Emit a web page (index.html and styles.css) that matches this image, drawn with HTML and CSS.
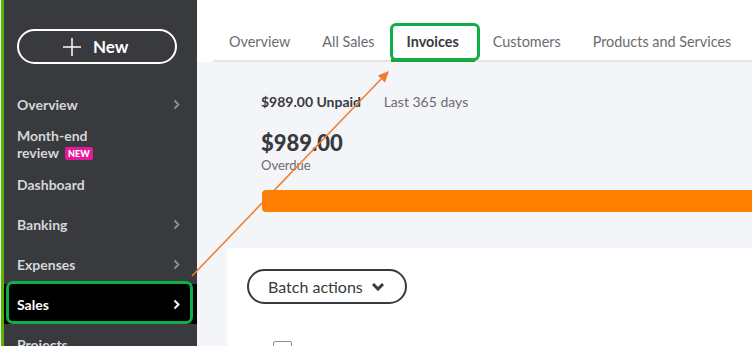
FILE: index.html
```html
<!DOCTYPE html>
<html lang="en">
<head>
<meta charset="UTF-8" />
<meta name="viewport" content="width=device-width, initial-scale=1.0" />
<title>Sales - Invoices</title>
<link rel="stylesheet" href="styles.css">
</head>
<body>
<div class="app">

<!-- left navigation -->
<aside class="sidebar">
    <button class="new-button">
        <svg class="plus" width="18" height="18" viewBox="0 0 18 18">
            <path d="M9 0V18M0 9H18" stroke="#fff" stroke-width="1.5" fill="none" />
        </svg>
        <span>New</span>
    </button>
    <nav class="nav">
        <a class="nav-item">Overview <svg class="chev" width="7" height="11" viewBox="0 0 7 11"><polyline points="1.5,1.5 5.5,5.5 1.5,9.5" /></svg></a>
        <a class="nav-item two-line"><span>Month-end<br>review <span class="badge">NEW</span></span></a>
        <a class="nav-item">Dashboard</a>
        <a class="nav-item">Banking <svg class="chev" width="7" height="11" viewBox="0 0 7 11"><polyline points="1.5,1.5 5.5,5.5 1.5,9.5" /></svg></a>
        <a class="nav-item">Expenses <svg class="chev" width="7" height="11" viewBox="0 0 7 11"><polyline points="1.5,1.5 5.5,5.5 1.5,9.5" /></svg></a>
        <a class="nav-item active">Sales <svg class="chev" width="7" height="11" viewBox="0 0 7 11"><polyline points="1.5,1.5 5.5,5.5 1.5,9.5" /></svg></a>
        <a class="nav-item">Projects</a>
    </nav>
</aside>

<!-- main area -->
<main class="main">
    <div class="tabbar">
        <div class="tabs">
            <a class="tab">Overview</a>
            <a class="tab">All Sales</a>
            <a class="tab active">Invoices</a>
            <a class="tab">Customers</a>
            <a class="tab">Products and Services</a>
        </div>
    </div>

    <section class="summary">
        <div class="summary-head">
            <span class="unpaid">$989.00 Unpaid</span>
            <span class="period">Last 365 days</span>
        </div>
        <div class="amount">$989.00</div>
        <div class="amount-label">Overdue</div>
        <div class="overdue-bar"></div>
    </section>

    <section class="card">
        <button class="batch-button">
            Batch actions
            <svg width="14" height="9" viewBox="0 0 14 9"><polyline points="2,2 7,7 12,2" /></svg>
        </button>
        <div class="table-head">
            <span class="checkbox"></span>
        </div>
    </section>
</main>

<!-- annotation arrow -->
<svg class="arrow" width="752" height="346" viewBox="0 0 752 346">
    <line x1="192" y1="276" x2="384" y2="76" stroke="#ee7d2f" stroke-width="1.5" />
    <polygon points="389,71 385,82.4 377.8,75.4" fill="#ee7d2f" />
</svg>

</div>
</body>
</html>
```

FILE: styles.css
```css
* {
    box-sizing: border-box;
}
body {
    margin: 0;
    font-family: Lato, 'Open Sans', Arial, sans-serif;
    background-color: #ffffff;
    overflow: hidden;
}
.app {
    position: relative;
    display: flex;
    width: 752px;
    height: 346px;
    overflow: hidden;
}

/* sidebar */
.sidebar {
    flex: 0 0 196px;
    margin-left: 1px;
    background-color: #393a3d;
    border-left: 3px solid #53b700;
    padding-top: 29px;
}
.new-button {
    display: flex;
    align-items: center;
    width: 160px;
    height: 35px;
    margin-left: 13px;
    padding: 0 0 0 44px;
    background: transparent;
    border: 2px solid #ffffff;
    border-radius: 18px;
    color: #ffffff;
    font-family: inherit;
    font-size: 17px;
    font-weight: 700;
}
.new-button .plus {
    margin-right: 12px;
}
.nav {
    margin-top: 20px;
}
.nav-item {
    position: relative;
    display: flex;
    align-items: center;
    justify-content: space-between;
    height: 40px;
    padding: 0 17px 0 13px;
    color: #d4d7dc;
    font-size: 14px;
    font-weight: 700;
    line-height: 17px;
}
.nav-item .chev {
    stroke: #8d9096;
    stroke-width: 1.8;
    fill: none;
}
.badge {
    display: inline-block;
    margin-left: 3px;
    padding: 0 3px;
    height: 13px;
    line-height: 13px;
    border-radius: 2px;
    background-color: #e5199b;
    color: #ffffff;
    font-size: 9px;
    font-weight: 900;
    vertical-align: 1px;
}
.nav-item.active {
    background-color: #000000;
    color: #ffffff;
}
.nav-item.active .chev {
    stroke: #ffffff;
    stroke-width: 2;
}
/* highlight box drawn over the active item */
.nav-item.active::after {
    content: '';
    position: absolute;
    left: 2px;
    right: 4px;
    top: -3px;
    bottom: 0;
    border: 3px solid #0fae4d;
    border-radius: 7px;
}

/* main */
.main {
    flex: 1;
    min-width: 0;
    background-color: #f4f5f8;
}
.tabbar {
    background-color: #ffffff;
    padding-left: 16px;
}
.tabs {
    display: flex;
    height: 62px;
    border-bottom: 2px solid #e3e5e8;
    white-space: nowrap;
}
.tab {
    position: relative;
    display: flex;
    align-items: center;
    height: 60px;
    padding: 22px 16px 0;
    color: #6b6c72;
    font-size: 14.4px;
}
.tab.active {
    color: #393a3d;
    font-weight: 700;
    padding-right: 18px;
}
.tab.active::before {
    content: '';
    position: absolute;
    left: 0;
    right: 2px;
    bottom: -2px;
    height: 3px;
    background-color: #2ca01c;
}
.tab.active::after {
    content: '';
    position: absolute;
    left: -1px;
    right: -3px;
    top: 23px;
    height: 32px;
    border: 3px solid #0fae4d;
    border-radius: 6px;
}

.summary {
    padding: 31px 0 0 64px;
    color: #393a3d;
}
.summary-head {
    font-size: 14px;
    line-height: 18px;
}
.unpaid {
    font-weight: 700;
    margin-right: 19px;
}
.period {
    color: #6b6c72;
}
.amount {
    margin-top: 19px;
    font-size: 22px;
    font-weight: 900;
    line-height: 26px;
}
.amount-label {
    font-size: 13px;
    line-height: 18px;
    color: #6b6c72;
}
.overdue-bar {
    margin-top: 16px;
    margin-left: 1px;
    height: 22px;
    background-color: #ff8000;
    border-radius: 4px 0 0 4px;
}

.card {
    margin: 36px 0 0 30px;
    height: 120px;
    background-color: #ffffff;
    padding: 20px 0 0 20px;
}
.batch-button {
    display: flex;
    align-items: center;
    gap: 8px;
    height: 35px;
    width: 160px;
    margin-top: 1px;
    padding: 0 0 0 19px;
    background: #ffffff;
    border: 2px solid #393a3d;
    border-radius: 18px;
    color: #393a3d;
    font-family: inherit;
    font-size: 16px;
}
.batch-button svg {
    stroke: #393a3d;
    stroke-width: 3;
    fill: none;
}
.table-head {
    padding: 37px 0 0 26px;
}
.checkbox {
    display: block;
    width: 19px;
    height: 19px;
    border: 1px solid #8d9096;
    border-radius: 2px;
}

/* annotation layer */
.arrow {
    position: absolute;
    left: 0;
    top: 0;
    pointer-events: none;
}
```
